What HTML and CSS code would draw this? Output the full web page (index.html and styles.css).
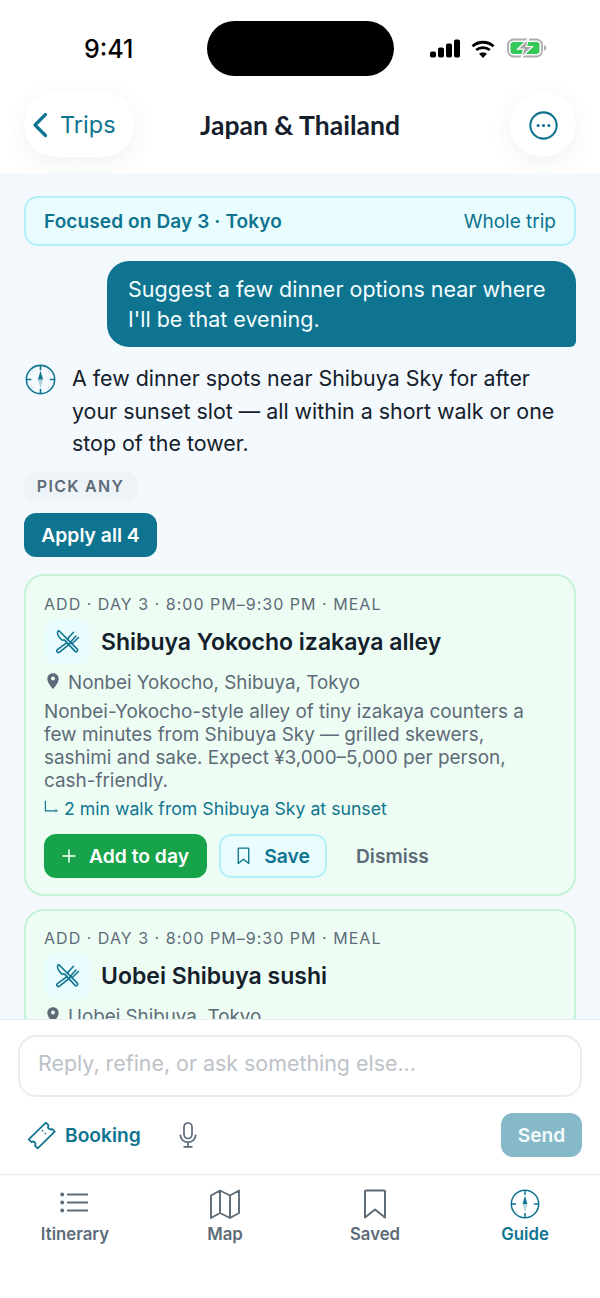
FILE: index.html
```html
<!DOCTYPE html>
<html lang="en">
<head>
<meta charset="utf-8">
<title>Japan &amp; Thailand</title>
<link rel="stylesheet" href="styles.css">
</head>
<body>
<svg class="defs" aria-hidden="true">
  <defs>
    <symbol id="compass" viewBox="0 0 32 32">
      <circle cx="16" cy="16" r="14.6" fill="none" stroke="currentColor" stroke-width="1.6"/>
      <path d="M16 1.5v5M16 25.5v5M1.5 16h5M25.500 16h5" fill="none" stroke="currentColor" stroke-width="1.6"/>
      <path d="M16 7l-2.600 9h5.200z" fill="currentColor"/>
      <path d="M16 25l-2.600-9h5.200z" fill="currentColor" opacity=".3"/>
      <g fill="currentColor" opacity=".35">
        <circle cx="7.500" cy="7.500" r=".7"/><circle cx="24.500" cy="7.500" r=".7"/><circle cx="7.500" cy="24.500" r=".7"/><circle cx="24.500" cy="24.500" r=".7"/>
      </g>
    </symbol>
    <symbol id="utensils" viewBox="0 0 24 24">
      <g fill="none" stroke="currentColor" stroke-width="1.500" stroke-linecap="round" stroke-linejoin="round">
        <path d="M2.700 2.300c-1 2.200.6 5.200 3.800 8.200l2.800.2 10 10.800c1.300 1.200 3.300-.9 2.100-2.200L4.300 2.100c-.5-.5-1.300-.4-1.600.2z"/>
        <path d="M11.200 13.300l-8.900 6.500c-1.500 1.300.5 3.700 2.100 2.400l8.900-7.200"/>
        <path d="M13.300 15l1-1.400 2.600.1 5.600-5.500M12.800 10.800l-.2-2.100 5.200-5.500M15 12.400l5.100-5.700"/>
      </g>
    </symbol>
    <symbol id="pin" viewBox="0 0 16 20">
      <path fill-rule="evenodd" d="M8 1C4.300 1 1.500 3.800 1.500 7.300 1.500 11.500 6 17 8 19c2-2 6.500-7.500 6.500-11.700C14.500 3.800 11.700 1 8 1zm0 8.500a2.300 2.300 0 1 1 0-4.600 2.300 2.300 0 0 1 0 4.600z" fill="currentColor"/>
    </symbol>
    <symbol id="bookmark" viewBox="0 0 20 24">
      <path d="M3 2.500c0-.6.500-1 1-1h12c.6 0 1 .4 1 1v19.500l-7-5.600-7 5.600z" fill="none" stroke="currentColor" stroke-width="1.800" stroke-linejoin="round"/>
    </symbol>
  </defs>
</svg>

<div class="page">
  <header class="top">
    <div class="status">
      <span class="clock">9:41</span>
      <div class="island"></div>
      <div class="status-icons">
        <svg class="ic-signal" viewBox="0 0 30 18" aria-hidden="true">
          <rect x="0" y="12" width="6" height="6" rx="1.800"/>
          <rect x="8" y="8" width="6" height="10" rx="1.800"/>
          <rect x="16" y="4" width="6" height="14" rx="1.800"/>
          <rect x="24" y="0" width="6" height="18" rx="1.800"/>
        </svg>
        <svg class="ic-wifi" viewBox="0 0 24 18" aria-hidden="true">
          <path d="M1.500 6.200C7.400.9 16.600.9 22.500 6.200M5.200 10C9 6.700 15 6.700 18.800 10" fill="none" stroke="#000" stroke-width="2.800"/>
          <path d="M12 18l-4-4.200c2.300-1.900 5.700-1.900 8 0z" fill="#000"/>
        </svg>
        <svg class="ic-batt" viewBox="0 0 40 20" aria-hidden="true">
          <rect x="1" y="1.500" width="34" height="17" rx="5.500" fill="none" stroke="#a9adab" stroke-width="1.800"/>
          <rect x="3.500" y="4" width="29" height="12" rx="3.200" fill="#34c759"/>
          <path d="M37 7v6c1.400-.4 2.200-1.600 2.200-3S38.400 7.400 37 7z" fill="#a9adab"/>
          <path d="M22 0L10.500 11.200h6.300L14 20l11.500-11.500h-6.300z" fill="#a3a7a5" stroke="#fff" stroke-width="1.200"/>
        </svg>
      </div>
    </div>
    <div class="navbar">
      <div class="nav-left">
        <button class="back" type="button">
          <svg class="ic-chev" viewBox="0 0 16 26" aria-hidden="true"><path d="M13.500 2.500L3 13l10.500 10.500" fill="none" stroke="currentColor" stroke-width="3.200" stroke-linecap="round" stroke-linejoin="round"/></svg>
          <span>Trips</span>
        </button>
      </div>
      <h1 class="title">Japan &amp; Thailand</h1>
      <div class="nav-right">
        <button class="more" type="button" aria-label="More">
          <svg class="ic-more" viewBox="0 0 28 28" aria-hidden="true">
            <circle cx="14" cy="14" r="12.700" fill="none" stroke="currentColor" stroke-width="2"/>
            <circle cx="8.800" cy="14" r="1.500" fill="currentColor"/><circle cx="14" cy="14" r="1.500" fill="currentColor"/><circle cx="19.200" cy="14" r="1.500" fill="currentColor"/>
          </svg>
        </button>
      </div>
    </div>
  </header>

  <main class="chat">
    <div class="focus">
      <strong>Focused on Day 3 · Tokyo</strong>
      <span>Whole trip</span>
    </div>
    <div class="bubble">Suggest a few dinner options near where I'll be that evening.</div>
    <div class="reply">
      <svg class="ic-guide"><use href="#compass"/></svg>
      <p>A few dinner spots near Shibuya Sky for after your sunset slot — all within a short walk or one stop of the tower.</p>
    </div>
    <div class="pick">PICK ANY</div>
    <button class="apply" type="button">Apply all 4</button>

    <article class="card">
      <div class="meta">ADD · DAY 3 · 8:00 PM–9:30 PM · MEAL</div>
      <div class="card-head">
        <span class="tile"><svg class="ic-food"><use href="#utensils"/></svg></span>
        <h2>Shibuya Yokocho izakaya alley</h2>
      </div>
      <div class="place"><svg class="ic-pin"><use href="#pin"/></svg>Nonbei Yokocho, Shibuya, Tokyo</div>
      <p class="desc">Nonbei-Yokocho-style alley of tiny izakaya counters a few minutes from Shibuya Sky — grilled skewers, sashimi and sake. Expect ¥3,000–5,000 per person, cash-friendly.</p>
      <div class="why">
        <svg class="ic-turn" viewBox="0 0 16 16" aria-hidden="true"><path d="M1.500 1v10.500h11" fill="none" stroke="currentColor" stroke-width="1.300"/><path d="M12.300 9.700l2.500 1.800-2.500 1.800z" fill="currentColor"/></svg>
        2 min walk from Shibuya Sky at sunset
      </div>
      <div class="actions">
        <button class="add" type="button"><svg class="ic-plus" viewBox="0 0 14 14" aria-hidden="true"><path d="M7 .5v13M.5 7h13" fill="none" stroke="currentColor" stroke-width="1.500"/></svg>Add to day</button>
        <button class="save" type="button"><svg class="ic-save"><use href="#bookmark"/></svg>Save</button>
        <button class="dismiss" type="button">Dismiss</button>
      </div>
    </article>

    <article class="card">
      <div class="meta">ADD · DAY 3 · 8:00 PM–9:30 PM · MEAL</div>
      <div class="card-head">
        <span class="tile"><svg class="ic-food"><use href="#utensils"/></svg></span>
        <h2>Uobei Shibuya sushi</h2>
      </div>
      <div class="place"><svg class="ic-pin"><use href="#pin"/></svg>Uobei Shibuya, Tokyo</div>
    </article>
  </main>

  <section class="composer">
    <div class="input">Reply, refine, or ask something else...</div>
    <div class="tools">
      <button class="booking" type="button">
        <svg class="ic-ticket" viewBox="0 0 30 30" aria-hidden="true">
          <path d="M19.500 1.800l2.800 2.800c-.9 1.300-.6 2.600.2 3.400.8.800 2.100 1.100 3.400.2l2.800 2.800L11 28.200l-2.800-2.800c.9-1.300.6-2.600-.2-3.400-.8-.8-2.100-1.100-3.400-.2L1.800 19z" fill="none" stroke="currentColor" stroke-width="1.800" stroke-linejoin="round"/>
          <path d="M15.500 9.500l1.200 1.200M18.300 12.300l1.200 1.200" stroke="currentColor" stroke-width="1.500" fill="none"/>
        </svg>
        Booking
      </button>
      <button class="mic" type="button" aria-label="Voice">
        <svg class="ic-mic" viewBox="0 0 18 26" aria-hidden="true">
          <rect x="5" y="1" width="8" height="15.500" rx="4" fill="none" stroke="currentColor" stroke-width="1.700"/>
          <path d="M1.300 12.500c0 4.600 3.300 7.600 7.700 7.600s7.700-3 7.700-7.600M9 20v4.800M4.500 24.800h9" fill="none" stroke="currentColor" stroke-width="1.700"/>
        </svg>
      </button>
      <button class="send" type="button">Send</button>
    </div>
  </section>

  <nav class="tabs">
    <a class="tab">
      <svg class="tab-icon" viewBox="0 0 30 30" aria-hidden="true">
        <path d="M7 5.500h21M7 13.500h21M7 21.500h21" fill="none" stroke="currentColor" stroke-width="2"/>
        <circle cx="2.200" cy="5.500" r="1.900" fill="currentColor"/><circle cx="2.200" cy="13.500" r="1.900" fill="currentColor"/><circle cx="2.200" cy="21.500" r="1.900" fill="currentColor"/>
      </svg>
      Itinerary
    </a>
    <a class="tab">
      <svg class="tab-icon" viewBox="0 0 30 30" aria-hidden="true">
        <path d="M1 6.500l9-5 10 5 9-5v22.500l-9 5-10-5-9 5zM10 1.500v23M20 6.500v23" fill="none" stroke="currentColor" stroke-width="1.900" stroke-linejoin="round"/>
      </svg>
      Map
    </a>
    <a class="tab">
      <svg class="tab-icon" viewBox="0 0 30 30" aria-hidden="true">
        <path d="M5 2.500c0-.6.500-1 1-1h18c.6 0 1 .4 1 1v26l-10-8-10 8z" fill="none" stroke="currentColor" stroke-width="2" stroke-linejoin="round"/>
      </svg>
      Saved
    </a>
    <a class="tab active">
      <svg class="tab-icon"><use href="#compass"/></svg>
      Guide
    </a>
  </nav>
</div>
</body>
</html>
```
FILE: styles.css
```css
* { box-sizing: border-box; }
html, body { margin: 0; padding: 0; }
body { background: #fff; font-family: Inter, "Liberation Sans", sans-serif; color: #14202b; }
button { font: inherit; border: 0; background: none; padding: 0; color: inherit; }
.defs { position: absolute; width: 0; height: 0; }
.page { width: 600px; height: 1298px; display: flex; flex-direction: column; overflow: hidden; }

.top { height: 173px; background: #fff; flex: none; }
.status { height: 92px; display: flex; align-items: flex-start; position: relative; }
.clock { position: absolute; left: 84px; top: 33px; font-size: 25px; line-height: 32px; font-weight: 500; color: #000; }
.island { position: absolute; left: 207px; top: 21px; width: 187px; height: 55px; border-radius: 28px; background: #000; }
.status-icons { position: absolute; left: 430px; top: 39px; display: flex; align-items: center; gap: 11px; }
.ic-signal { width: 30px; height: 19px; fill: #000; }
.ic-wifi { width: 24px; height: 18px; margin-right: 1px; }
.ic-batt { width: 40px; height: 20px; margin-top: -1px; }

.navbar { height: 81px; display: grid; grid-template-columns: 1fr auto 1fr; align-items: start; padding: 0 24px; }
.nav-right { display: flex; justify-content: flex-end; }
.back { width: 110px; height: 65px; border-radius: 32px; background: #fff; box-shadow: 0 6px 24px rgba(30, 60, 80, .07); display: flex; align-items: center; gap: 12px; padding-left: 8px; color: #0e7490; font-size: 23.500px; }
.ic-chev { width: 16px; height: 26px; }
.title { margin: 0; font-family: Lato, sans-serif; font-size: 26.500px; line-height: 66px; font-weight: 700; color: #14202b; }
.more { width: 66px; height: 65px; border-radius: 50%; background: #fff; box-shadow: 0 6px 24px rgba(30, 60, 80, .07); display: flex; align-items: center; justify-content: center; color: #0e7490; }
.ic-more { width: 29px; height: 29px; margin-top: 1px; }

.chat { flex: 1; min-height: 0; overflow: hidden; background: #f3f9fc; padding: 23px 24px 0; display: flex; flex-direction: column; }
.focus { height: 50px; flex: none; border: 2px solid #b5eff7; border-radius: 14px; background: #e9fcfe; display: flex; align-items: center; justify-content: space-between; padding: 1px 18px 0 18px; color: #0e7490; font-size: 19px; }
.focus strong { font-weight: 600; letter-spacing: .12px; }
.bubble { flex: none; margin: 15px 0 0 83px; width: 469px; height: 86px; padding: 13px 21px; background: #0e7490; color: #f4fdff; font-size: 21.500px; line-height: 30px; border-radius: 22px 22px 6px 22px; }
.reply { flex: none; margin-top: 15px; display: flex; align-items: flex-start; gap: 16px; padding-left: 1px; }
.ic-guide { flex: none; width: 31px; height: 31px; margin-top: 2px; color: #0e7490; }
.reply p { margin: 0; font-size: 21.400px; line-height: 32.500px; color: #14202b; }
.pick { flex: none; align-self: flex-start; margin-top: 12px; height: 29px; width: 113px; border-radius: 9px; background: #eef3f7; color: #5d6b78; font-size: 16px; font-weight: 600; letter-spacing: 1.300px; line-height: 29px; text-align: center; }
.apply { flex: none; align-self: flex-start; margin-top: 12px; height: 44px; width: 133px; border-radius: 12px; background: #0e7490; color: #fff; font-size: 19.300px; font-weight: 600; }

.card { flex: none; margin-top: 17px; padding: 17px 18px 16px; border: 2px solid #c4f3d5; border-radius: 20px; background: #eefdf4; }
.card + .card { margin-top: 13px; padding-top: 16px; }
.meta { font-size: 16px; line-height: 22px; letter-spacing: 1.020px; color: #5d6b78; }
.card-head { display: flex; align-items: center; gap: 11px; margin-top: 4px; }
.tile { flex: none; width: 46px; height: 46px; border-radius: 13px; background: #e9fcfe; display: flex; align-items: center; justify-content: center; }
.ic-food { width: 25px; height: 25px; color: #0e7490; }
.card-head h2 { margin: 0; font-size: 23px; line-height: 32px; font-weight: 600; color: #14202b; }
.place { display: flex; align-items: center; gap: 8px; margin: 4px 0 0 2px; font-size: 18.800px; line-height: 27px; color: #5d6b78; }
.ic-pin { width: 14px; height: 18px; flex: none; margin-top: -2px; }
.desc { margin: 4px 0 0; font-size: 18.900px; line-height: 23px; color: #5d6b78; }
.why { display: flex; align-items: center; gap: 5px; margin-top: 5px; font-size: 17.700px; line-height: 24px; color: #0e7490; }
.ic-turn { width: 15px; height: 15px; flex: none; margin-top: -2px; }
.actions { display: flex; align-items: center; gap: 12px; margin-top: 13px; }
.add { height: 44px; width: 163px; border-radius: 12px; background: #16a34a; color: #fff; font-size: 19.300px; font-weight: 600; display: flex; align-items: center; justify-content: center; gap: 13px; }
.ic-plus { width: 14px; height: 14px; }
.save { height: 44px; width: 108px; border: 2px solid #b5eff7; border-radius: 12px; background: #e9fcfe; color: #0e7490; font-size: 19.300px; font-weight: 600; display: flex; align-items: center; justify-content: center; gap: 13px; }
.ic-save { width: 15px; height: 20px; }
.dismiss { margin-left: 17px; color: #5d6b78; font-size: 19.200px; font-weight: 600; }

.composer { flex: none; height: 155px; background: #fff; border-top: 1.500px solid #e5ebf0; padding: 15px 18px 0; }
.input { height: 62px; border: 2px solid #e8edf2; border-radius: 18px; padding: 0 18px; font-size: 21.400px; line-height: 53px; color: #bcc2c8; }
.tools { display: flex; align-items: center; margin-top: 16px; height: 44px; }
.booking { display: flex; align-items: center; gap: 9px; margin-left: 9px; color: #0e7490; font-size: 19.200px; font-weight: 600; }
.ic-ticket { width: 29px; height: 29px; }
.mic { margin-left: 38px; color: #5d6b78; display: flex; }
.ic-mic { width: 18px; height: 26px; }
.send { margin-left: auto; width: 81px; height: 44px; border-radius: 12px; background: #86b9c8; color: #f4fbfd; font-size: 19.200px; font-weight: 600; }

.tabs { flex: none; height: 124px; background: #fff; border-top: 1.500px solid #e9edf1; display: grid; grid-template-columns: repeat(4, 150px); }
.tab { display: flex; flex-direction: column; align-items: center; padding-top: 14px; gap: 3px; font-size: 16.800px; line-height: 24px; font-weight: 600; color: #5d6b78; }
.tab-icon { width: 30px; height: 30px; color: #5d6b78; }
.tab.active, .tab.active .tab-icon { color: #0e7490; }
```
